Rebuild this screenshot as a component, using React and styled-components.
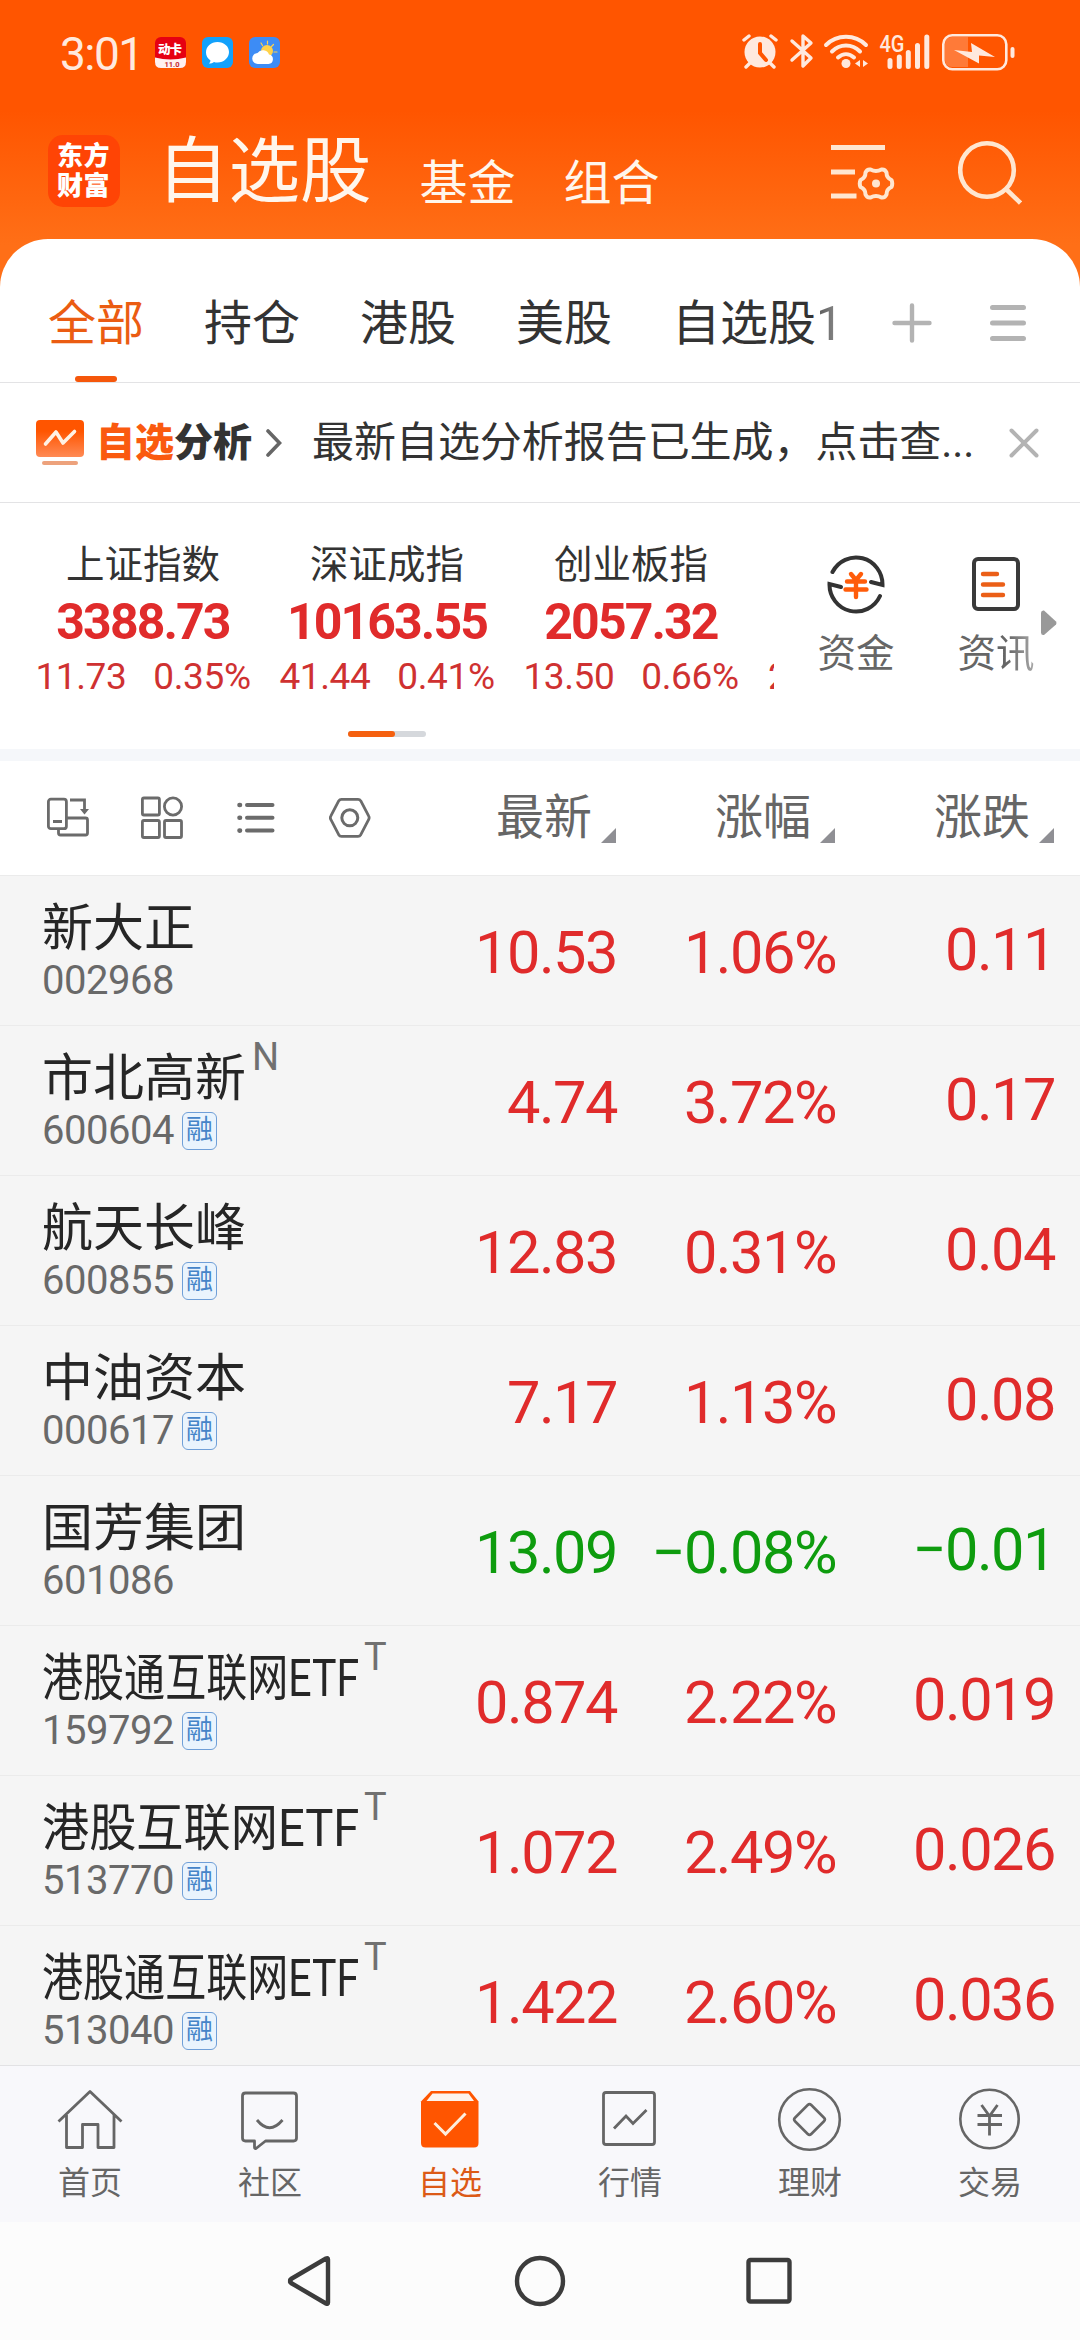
import styled, { createGlobalStyle } from "styled-components";

const indexes = [
  { name: "上证指数", value: "3388.73", diff: "11.73", rate: "0.35%" },
  { name: "深证成指", value: "10163.55", diff: "41.44", rate: "0.41%" },
  { name: "创业板指", value: "2057.32", diff: "13.50", rate: "0.66%" },
];

const stocks = [
  { name: "新大正", code: "002968", price: "10.53", rate: "1.06%", diff: "0.11" },
  { name: "市北高新", mark: "N", code: "600604", margin: true, price: "4.74", rate: "3.72%", diff: "0.17" },
  { name: "航天长峰", code: "600855", margin: true, price: "12.83", rate: "0.31%", diff: "0.04" },
  { name: "中油资本", code: "000617", margin: true, price: "7.17", rate: "1.13%", diff: "0.08" },
  { name: "国芳集团", code: "601086", down: true, price: "13.09", rate: "−0.08%", diff: "−0.01" },
  { name: "港股通互联网ETF", squeeze: 0.805, mark: "T", code: "159792", margin: true, price: "0.874", rate: "2.22%", diff: "0.019" },
  { name: "港股互联网ETF", squeeze: 0.925, mark: "T", code: "513770", margin: true, price: "1.072", rate: "2.49%", diff: "0.026" },
  { name: "港股通互联网ETF", squeeze: 0.805, mark: "T", code: "513040", margin: true, price: "1.422", rate: "2.60%", diff: "0.036" },
];

const tabs = ["全部", "持仓", "港股", "美股"];

const StatusIcons = () => (
  <svg width="274" height="40" viewBox="0 0 274 40" fill="none" stroke="#ffe9de">
    {/* alarm */}
    <g strokeWidth="3.4" strokeLinecap="round">
      <circle cx="18" cy="21" r="15.5" fill="#ffe9de" stroke="none" />
      <path d="M2 9l5-4M34 9l-5-4M8 32l-4 4M28 32l4 4" />
      <path d="M18 13v9l6 7" stroke="#ff5500" strokeWidth="4" />
    </g>
    {/* bluetooth */}
    <path d="M50 10l19 17-8 8V5l8 7-19 17" strokeWidth="3.4" strokeLinejoin="round" strokeLinecap="round" />
    {/* wifi */}
    <g strokeWidth="4" strokeLinecap="round">
      <path d="M84 14c11-11 29-11 40 0M90 20.500c8-8 20-8 28 0M96 26.500c5-4.500 11-4.500 16 0" />
      <circle cx="104" cy="32.500" r="4.500" fill="#ffe9de" stroke="none" />
      <path d="M118 29v7l-5-3.500zM121 29v7l5-3.500z" fill="#ffe9de" stroke="none" />
    </g>
    {/* signal */}
    <g strokeWidth="5" strokeLinecap="round">
      <path d="M148 29.500v6M157.300 26v9.500M166.300 21.500v14M175.500 14.500v21M184.800 6v29.500" />
    </g>
    <text x="137.500" y="21" fill="#ffe9de" stroke="none" fontSize="23" fontWeight="500" textLength="25" lengthAdjust="spacingAndGlyphs">4G</text>
    {/* battery */}
    <path d="M210 6h16v30h-16q-7 0-7-7V13q0-7 7-7z" fill="#ff7a38" stroke="none" />
    <rect x="201.300" y="4.300" width="63" height="34" rx="9" strokeWidth="2.600" />
    <path d="M212 19l18 2-1-9 24 14-16-1.500v8z" fill="#ffe9de" stroke="none" />
    <rect x="268.500" y="16" width="4" height="11" rx="2" fill="#ffe9de" stroke="none" />
  </svg>
);

const CardAppIcon = () => (
  <svg width="32" height="32" viewBox="0 0 32 32">
    <rect width="31" height="31" rx="6" fill="#e60012" />
    <path d="M0 20.500q15.500 4 31 0V25q0 6-6 6H6q-6 0-6-6z" fill="#fff0f0" />
    <text x="3" y="17" fontSize="12.500" fontWeight="900" fill="#fff" textLength="24">动卡</text>
    <text x="9.500" y="29.500" fontSize="7.500" fontWeight="700" fill="#c3272e">11.0</text>
  </svg>
);

const ChatAppIcon = () => (
  <svg width="32" height="32" viewBox="0 0 32 32">
    <rect width="31" height="31" rx="6" fill="#12a1fb" />
    <path d="M15.500 5c6.500 0 11.500 4.400 11.500 10s-5 10.500-11.500 10.500c-1.500 0-2.500 0-3.500-.5-1.500 1-3 1.500-5 1.500 1-1 1.500-2 1.500-3C5.500 21.500 4 18.500 4 15.500 4 9.500 9 5 15.500 5z" fill="#fff" />
  </svg>
);

const WeatherAppIcon = () => (
  <svg width="32" height="32" viewBox="0 0 32 32">
    <rect width="31" height="31" rx="6" fill="#3d8cf5" />
    <circle cx="18" cy="14" r="6" fill="#ffd24a" />
    <path d="M18.500 4v3M12 6l1.500 2.500M24.500 7.500l-2 2M28 15h-3" stroke="#ffd24a" strokeWidth="1.200" strokeLinecap="round" />
    <path d="M9 27a5.500 5.500 0 0 1-.5-11 6.500 6.500 0 0 1 11.500 1.500A4.800 4.800 0 0 1 19.500 27z" fill="#fff" />
  </svg>
);

const FilterIcon = () => (
  <svg width="64" height="60" viewBox="0 0 64 60" fill="none" stroke="#ffe6d0" strokeWidth="5">
    <path d="M0 6.500h54M0 31h24M0 55h25.500" />
    <path
      d="M39.500 28.500q5.500 3 11 0q3.500-.5 5 3q0 5.500 5 7.500q1.500 3.500 0 7q-5 2-5 7.500q-1.500 3.500-5 3q-5.500-3-11 0q-3.500.5-5-3q0-5.500-5-7.500q-1.500-3.500 0-7q5-2 5-7.500q1.500-3.500 5-3z"
      strokeWidth="4"
      strokeLinejoin="round"
    />
    <circle cx="45" cy="42.500" r="4" fill="#ffe6d0" stroke="none" />
  </svg>
);

const SearchIcon = () => (
  <svg width="64" height="66" viewBox="0 0 64 66" fill="none" stroke="#ffe6d0" strokeWidth="4.600">
    <circle cx="29" cy="31" r="26.800" />
    <path d="M48 50l14.500 14" />
  </svg>
);

const ReportIcon = () => (
  <svg width="48" height="46" viewBox="0 0 48 46" fill="none">
    <defs>
      <linearGradient id="report" x1="0" y1="0" x2="0" y2="1">
        <stop offset="0.300" stopColor="#ff5500" />
        <stop offset="1" stopColor="#ff8a55" />
      </linearGradient>
    </defs>
    <rect width="48" height="37" rx="4" fill="url(#report)" />
    <path d="M9.500 24l10.500-12 7 11 11.500-11.500" stroke="#fff1e4" strokeWidth="3.600" strokeLinecap="round" strokeLinejoin="round" />
    <rect x="6" y="41" width="36" height="4" rx="2" fill="#eda27c" />
  </svg>
);

const FundsIcon = () => (
  <svg width="60" height="60" viewBox="0 0 60 60" fill="none" stroke="#333" strokeWidth="4">
    <path d="M6.500 18A26.500 27 0 0 1 56.500 31l-11.500-3" strokeLinecap="round" />
    <path d="M54 42A26.500 27 0 0 1 3.500 30l11.500 3" strokeLinecap="round" />
    <path d="M25 20l5 6 5-6M21 27.500h18M19.500 35.500h21M30 26v17" stroke="#ff5c0a" strokeWidth="4.400" strokeLinecap="round" />
  </svg>
);

const NewsIcon = () => (
  <svg width="48" height="60" viewBox="0 0 48 60" fill="none">
    <rect x="2" y="5" width="44" height="50" rx="4" stroke="#3a3a3a" strokeWidth="4" />
    <path d="M11 20h14M11 30.500h20M11 41h20" stroke="#eb5f17" strokeWidth="4.400" strokeLinecap="round" />
  </svg>
);

const ToolIcons = () => (
  <>
    <svg width="42" height="44" viewBox="0 0 42 44" fill="none" stroke="#6b6b6b" strokeWidth="2.800">
      <rect x="1.400" y="3.200" width="18" height="29.500" rx="2.500" />
      <path d="M6 25.500h9M23 4h14.500v10M20 22h18.500q2 0 2 2v13q0 2-2 2H13.500q-2 0-2-2v-4" />
      <path d="M33 13h9l-4.500 5.500z" fill="#6b6b6b" stroke="none" />
    </svg>
    <svg width="42" height="44" viewBox="0 0 42 44" fill="none" stroke="#6b6b6b" strokeWidth="2.800">
      <rect x="1.400" y="2" width="17" height="17" rx="1.500" />
      <circle cx="32" cy="10.500" r="8.600" />
      <rect x="1.400" y="24.500" width="17" height="17" rx="1.500" />
      <rect x="23.500" y="24.500" width="17" height="17" rx="1.500" />
    </svg>
    <svg width="42" height="44" viewBox="0 0 42 44" fill="none" stroke="#6b6b6b" strokeWidth="4" strokeLinecap="round">
      <path d="M12 9h25.500M12 21.800h25.500M12 34.600h25.500" />
      <path d="M4.500 9h.5M4.500 21.800h.5M4.500 34.600h.5" strokeWidth="4.600" />
    </svg>
    <svg width="42" height="44" viewBox="0 0 42 44" fill="none" stroke="#6b6b6b" strokeWidth="2.800" strokeLinejoin="round">
      <path d="M12.500 3.300h16.500q1.800 0 2.800 1.600l7.800 15q1.100 1.900 0 3.800l-7.800 15q-1 1.600-2.800 1.600H12.500q-1.800 0-2.800-1.600L1.900 23.700q-1.100-1.900 0-3.800l7.800-15q1-1.600 2.800-1.600z" />
      <circle cx="20.800" cy="21.800" r="8" strokeWidth="3" />
    </svg>
  </>
);

const HomeIcon = () => (
  <svg width="66" height="66" viewBox="0 0 66 66" fill="none" stroke="#666" strokeWidth="2.800" strokeLinejoin="round">
    <path d="M1.500 34.500L33 4.500l31.500 30M9.500 28v32.500h16V37.500h15.500v23h16V28" />
  </svg>
);

const CommunityIcon = () => (
  <svg width="66" height="66" viewBox="0 0 66 66" fill="none" stroke="#666" strokeWidth="2.800" strokeLinejoin="round">
    <path d="M8.500 6h48q3 0 3 3v42q0 3-3 3H28.500L19 61.500q-1.500.5-1.500-1.500v-6h-9q-3 0-3-3V9q0-3 3-3z" />
    <path d="M20 33q12.500 15.500 25.500 0" />
  </svg>
);

const WatchIcon = () => (
  <svg width="66" height="66" viewBox="0 0 66 66" fill="none">
    <path d="M14 4h39l8.500 10.500V56q0 4.500-4.500 4.500H8.500Q4 60.500 4 56V14.500z" fill="#ff5500" />
    <path d="M15.500 6.500h36l5.500 7.500H9.500z" fill="#fdf3ec" />
    <path d="M17.500 36L28.500 47l20-20.500" stroke="#fdeedd" strokeWidth="3" />
  </svg>
);

const MarketIcon = () => (
  <svg width="66" height="66" viewBox="0 0 66 66" fill="none" stroke="#666" strokeWidth="2.800">
    <rect x="6.500" y="5.500" width="51" height="52" rx="2.500" />
    <path d="M17 41.500l12-12.500 7 7.500 13.500-13.500" />
  </svg>
);

const WealthIcon = () => (
  <svg width="66" height="66" viewBox="0 0 66 66" fill="none" stroke="#666" strokeWidth="2.600">
    <circle cx="32.500" cy="32.500" r="30.300" />
    <rect x="21" y="21" width="23" height="23" rx="2.500" transform="rotate(45 32.500 32.500)" />
  </svg>
);

const TradeIcon = () => (
  <svg width="66" height="66" viewBox="0 0 66 66" fill="none" stroke="#666" strokeWidth="2.600">
    <circle cx="32.500" cy="32" r="29.200" />
    <path d="M24.500 18l8 11 8-11M20.500 28.500h24.500M20.500 37.500h24.500M32.500 28v20.500" strokeWidth="2.800" />
  </svg>
);

const bottomTabs = [
  { label: "首页", Icon: HomeIcon },
  { label: "社区", Icon: CommunityIcon },
  { label: "自选", Icon: WatchIcon, active: true },
  { label: "行情", Icon: MarketIcon },
  { label: "理财", Icon: WealthIcon },
  { label: "交易", Icon: TradeIcon },
];

const App = () => {
  return (
    <>
      <GlobalStyle />
      <Page>
        <StatusBar>
          <Clock>3:01</Clock>
          <CardAppIcon />
          <ChatAppIcon />
          <WeatherAppIcon />
          <StatusRight>
            <StatusIcons />
          </StatusRight>
        </StatusBar>
        <TitleBar>
          <Logo>东方财富</Logo>
          <Title>自选股</Title>
          <SubTitle>基金</SubTitle>
          <SubTitle>组合</SubTitle>
          <TitleActions>
            <FilterIcon />
            <SearchIcon />
          </TitleActions>
        </TitleBar>

        <Sheet>
          <TabRow>
            {tabs.map((tab, i) => (
              <Tab key={tab} $active={i === 0}>{tab}</Tab>
            ))}
            <Tab><span>自选股<Faded>1</Faded></span></Tab>
            <TabActions>
              <svg width="40" height="40" viewBox="0 0 40 40" stroke="#b3b3b3" strokeWidth="4.400" strokeLinecap="round">
                <path d="M20 2.500v35M2.500 20h35" />
              </svg>
              <svg width="36" height="40" viewBox="0 0 36 40" stroke="#b3b3b3" strokeWidth="5" strokeLinecap="round">
                <path d="M2.500 4.500h31M2.500 20h31M2.500 35.500h31" />
              </svg>
            </TabActions>
          </TabRow>

          <Notice>
            <ReportIcon />
            <NoticeTitle><em>自选</em>分析</NoticeTitle>
            <svg width="16" height="30" viewBox="0 0 16 30" fill="none" stroke="#666" strokeWidth="3.600" strokeLinecap="round">
              <path d="M2 3l11.500 12L2 27" />
            </svg>
            <NoticeText>最新自选分析报告已生成，点击查...</NoticeText>
            <svg width="30" height="30" viewBox="0 0 30 30" stroke="#b3b3b3" strokeWidth="4" strokeLinecap="round">
              <path d="M2.500 2.500l25 25M27.500 2.500l-25 25" />
            </svg>
          </Notice>

          <IndexPanel>
            <IndexStrip>
              <IndexCards>
                {indexes.map((item) => (
                  <IndexCard key={item.name}>
                    <IndexName>{item.name}</IndexName>
                    <IndexValue>{item.value}</IndexValue>
                    <IndexChange>
                      <span>{item.diff}</span>
                      <span>{item.rate}</span>
                    </IndexChange>
                  </IndexCard>
                ))}
                <NextCard>2</NextCard>
              </IndexCards>
              <Pager><PagerBar /></Pager>
            </IndexStrip>
            <Shortcut>
              <FundsIcon />
              资金
            </Shortcut>
            <Shortcut>
              <NewsIcon />
              <span>资<Faded $light>讯</Faded></span>
            </Shortcut>
            <MoreArrow width="16" height="26" viewBox="0 0 16 26">
              <path d="M0 3q0-3 3-2.500l12 11q1 1.500 0 3l-12 10.500q-3 .5-3-2.500z" fill="#999" />
            </MoreArrow>
          </IndexPanel>

          <TableHead>
            <Tools><ToolIcons /></Tools>
            {["最新", "涨幅", "涨跌"].map((label) => (
              <HeadCell key={label}>
                {label}
                <svg width="15" height="15" viewBox="0 0 15 15"><path d="M15 0v15H0z" fill="#8f8f94" /></svg>
              </HeadCell>
            ))}
          </TableHead>

          <List>
            {stocks.map((s) => (
              <Row key={s.code}>
                <NameCell>
                  <NameLine>
                    <Name $squeeze={s.squeeze}>{s.name}</Name>
                    {s.mark && <Mark>{s.mark}</Mark>}
                  </NameLine>
                  <CodeLine>
                    {s.code}
                    {s.margin && <Badge>融</Badge>}
                  </CodeLine>
                </NameCell>
                <Num $down={s.down}>{s.price}</Num>
                <Num $down={s.down}>{s.rate}</Num>
                <Num $down={s.down} $last>{s.diff}</Num>
              </Row>
            ))}
          </List>
        </Sheet>

        <BottomBar>
          {bottomTabs.map(({ label, Icon, active }) => (
            <BottomTab key={label} $active={active}>
              <Icon />
              {label}
            </BottomTab>
          ))}
        </BottomBar>
        <SystemNav>
          <svg width="52" height="52" viewBox="0 0 52 52" fill="none" stroke="#3c3c3c" strokeWidth="4.400" strokeLinejoin="round">
            <path d="M5.500 26q-1-1 .5-2L41 3.500q2-1 2 1v43q0 2-2 1L6 28q-1.500-1-.5-2z" />
          </svg>
          <svg width="52" height="52" viewBox="0 0 52 52" fill="none" stroke="#3c3c3c" strokeWidth="4.400">
            <circle cx="26" cy="26" r="23" />
          </svg>
          <svg width="52" height="52" viewBox="0 0 52 52" fill="none" stroke="#3c3c3c" strokeWidth="4.400">
            <rect x="5.500" y="5" width="41" height="41.500" rx="2" />
          </svg>
        </SystemNav>
      </Page>
    </>
  );
};

const GlobalStyle = createGlobalStyle`
  body {
    margin: 0;
    font-family: Roboto, "Noto Sans CJK SC", sans-serif;
  }

  svg {
    display: block;
    flex: none;
  }
`;

const Page = styled.div`
  width: 1080px;
  height: 2340px;
  overflow: hidden;
  display: flex;
  flex-direction: column;
  background: linear-gradient(#ff5500 110px, #ff6f17 245px);
`;

const StatusBar = styled.div`
  height: 104px;
  box-sizing: border-box;
  padding: 33px 64px 0 60px;
  display: flex;
  align-items: flex-start;

  > svg {
    margin: 4px 15px 0 0;
  }
`;

const Clock = styled.div`
  width: 95px;
  color: #ffe9de;
  font-size: 46px;
  line-height: 42px;
  letter-spacing: -1.5px;
`;

const StatusRight = styled.div`
  margin: -2px 0 0 auto;
`;

const TitleBar = styled.div`
  height: 135px;
  box-sizing: border-box;
  padding: 31px 58px 0 48px;
  display: flex;
  align-items: flex-start;
  color: #fff6ec;
`;

const Logo = styled.div`
  width: 72px;
  height: 72px;
  box-sizing: border-box;
  padding: 6px 9px;
  border-radius: 15px;
  background: #ff4405;
  color: #fff;
  font-size: 26px;
  font-weight: 900;
  line-height: 30px;
  letter-spacing: 0.5px;
  word-break: break-all;
`;

const Title = styled.div`
  margin: 0 48px 0 37px;
  font-size: 71.5px;
  line-height: 74px;
`;

const SubTitle = styled.div`
  margin: 18px 48px 0 0;
  font-size: 48px;
  line-height: 62px;
`;

const TitleActions = styled.div`
  margin-left: auto;
  padding-top: 4px;
  display: flex;
  gap: 63px;
  align-items: flex-start;

  svg:first-child {
    margin-top: 2px;
  }
`;

const Sheet = styled.div`
  height: 1826px;
  border-radius: 48px 48px 0 0;
  background: #fff;
  overflow: hidden;
`;

const TabRow = styled.div`
  height: 144px;
  box-sizing: border-box;
  padding: 0 54px 0 48px;
  border-bottom: 1px solid #e3e3e5;
  display: flex;
  gap: 60px;
`;

const Tab = styled.div`
  height: 143px;
  box-sizing: border-box;
  padding-top: 23px;
  display: flex;
  flex-direction: column;
  align-items: center;
  flex: none;
  white-space: nowrap;
  color: ${(props) => (props.$active ? "#eb5c12" : "#333")};
  font-size: 48px;
  line-height: 124px;

  &::after {
    content: "";
    width: ${(props) => (props.$active ? "42px" : "0")};
    height: 6px;
    margin-top: -10px;
    border-radius: 3px;
    background: #f5570b;
  }
`;

const Faded = styled.span`
  color: transparent;
  background: ${(props) =>
    props.$light ? "linear-gradient(90deg, #666 30%, #aaa)" : "linear-gradient(90deg, #555, #999)"};
  -webkit-background-clip: text;
  background-clip: text;
`;

const TabActions = styled.div`
  margin-left: -11px;
  padding-top: 24px;
  display: flex;
  align-items: center;
  gap: 58px;
`;

const Notice = styled.div`
  height: 120px;
  box-sizing: border-box;
  padding: 0 41px 0 36px;
  border-bottom: 1px solid #e3e3e5;
  display: flex;
  align-items: center;
`;

const NoticeTitle = styled.div`
  margin: 0 14px 0 12px;
  color: #333;
  font-size: 39px;
  font-weight: 900;
  line-height: 50px;

  em {
    color: #fa5a0f;
    font-style: normal;
  }
`;

const NoticeText = styled.div`
  flex: 1;
  margin-left: 30px;
  color: #333;
  font-size: 42px;
  line-height: 50px;
  letter-spacing: -0.05px;
  white-space: nowrap;
`;

const IndexPanel = styled.div`
  height: 258px;
  box-sizing: border-box;
  border-bottom: 12px solid #f5f7fa;
  display: flex;
`;

const IndexStrip = styled.div`
  width: 774px;
  overflow: hidden;
`;

const IndexCards = styled.div`
  height: 228px;
  box-sizing: border-box;
  padding: 32px 0 0 21px;
  display: flex;
`;

const IndexCard = styled.div`
  flex: none;
  width: 244px;
  text-align: center;
`;

const IndexName = styled.div`
  color: #333;
  font-size: 38.5px;
  line-height: 60px;
`;

const IndexValue = styled.div`
  padding-top: 2px;
  color: #e02b2b;
  font-size: 50px;
  font-weight: 700;
  line-height: 50px;
  letter-spacing: -1.9px;
`;

const IndexChange = styled.div`
  display: flex;
  justify-content: center;
  gap: 27px;
  color: #cf3131;
  font-size: 37px;
  line-height: 60px;
  letter-spacing: -0.4px;
`;

const NextCard = styled(IndexChange)`
  padding: 112px 0 0 15px;
`;

const Pager = styled.div`
  width: 78px;
  height: 6px;
  margin-left: 348px;
  border-radius: 3px;
  background: #d5d8dc;
`;

const PagerBar = styled.div`
  width: 47px;
  height: 6px;
  border-radius: 3px;
  background: #f5600f;
`;

const Shortcut = styled.div`
  width: 140px;
  padding-top: 51px;
  margin-left: 12px;
  margin-right: -12px;
  display: flex;
  flex-direction: column;
  align-items: center;
  gap: 10px;
  color: #666;
  font-size: 38.5px;
  line-height: 60px;
`;

const MoreArrow = styled.svg`
  margin: 107px 0 0 -13px;
`;

const TableHead = styled.div`
  height: 115px;
  box-sizing: border-box;
  border-bottom: 1px solid #ebebeb;
  display: flex;
  align-items: center;
`;

const Tools = styled.div`
  width: 397px;
  padding-left: 47px;
  box-sizing: border-box;
  display: flex;
  gap: 52px;
`;

const HeadCell = styled.div`
  width: 219px;
  display: flex;
  justify-content: flex-end;
  align-items: flex-end;
  gap: 9px;
  color: #666;
  font-size: 48px;
  line-height: 60px;

  svg {
    margin-bottom: 5px;
  }
`;

const List = styled.div`
  height: 1189px;
  overflow: hidden;
  background: #f5f5f5;
`;

const Row = styled.div`
  height: 150px;
  box-sizing: border-box;
  border-bottom: 1px solid #ebebeb;
  display: flex;
`;

const NameCell = styled.div`
  width: 398px;
  box-sizing: border-box;
  padding: 16px 0 0 42px;
`;

const NameLine = styled.div`
  height: 67px;
  display: flex;
`;

const Name = styled.div`
  width: ${(props) => (props.$squeeze ? "316px" : "auto")};
  color: #262626;
  font-size: 51px;
  line-height: 74px;
  white-space: nowrap;
  transform: scaleX(${(props) => props.$squeeze || 1});
  transform-origin: left;
`;

const Mark = styled.div`
  margin: -5px 0 0 6px;
  color: #707070;
  font-size: 38px;
  line-height: 40px;
`;

const CodeLine = styled.div`
  display: flex;
  align-items: center;
  gap: 8px;
  height: 42px;
  color: #696969;
  font-size: 40px;
  letter-spacing: -0.5px;
`;

const Badge = styled.div`
  width: 35px;
  height: 38px;
  box-sizing: border-box;
  margin-top: 2px;
  border: 1.5px solid #6f9fd8;
  border-radius: 6px;
  background: #eaf4fd;
  color: #4584c8;
  font-size: 27px;
  line-height: 35px;
  letter-spacing: 0;
  display: flex;
  justify-content: center;
`;

const Num = styled.div`
  width: 219px;
  padding-top: ${(props) => (props.$last ? "42px" : "45px")};
  color: ${(props) => (props.$down ? "#0e9c0e" : "#e02b2b")};
  font-size: 59.5px;
  line-height: 64px;
  letter-spacing: -1.5px;
  text-align: right;
`;

const BottomBar = styled.div`
  height: 157px;
  box-sizing: border-box;
  border-top: 1px solid #e2e2e4;
  background: #f8f8fb;
  display: flex;
`;

const BottomTab = styled.div`
  flex: 1;
  padding-top: 21px;
  display: flex;
  flex-direction: column;
  align-items: center;
  color: ${(props) => (props.$active ? "#dc5a17" : "#666")};
  font-size: 32px;
  line-height: 60px;
`;

const SystemNav = styled.div`
  flex: 1;
  padding-top: 33px;
  display: flex;
  justify-content: center;
  align-items: flex-start;
  gap: 177px;
  background: #fcfcfc;
`;

export default App;
